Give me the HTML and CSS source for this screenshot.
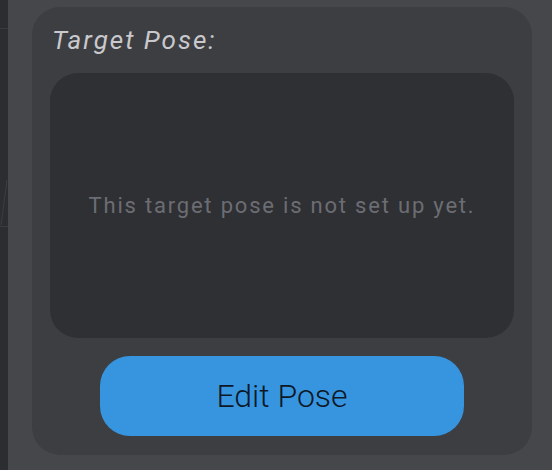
FILE: index.html
```html
<!DOCTYPE html>
<html lang="en">
<head>
<meta charset="UTF-8">
<meta name="viewport" content="width=device-width, initial-scale=1.0">
<title>Target Pose</title>
<link rel="stylesheet" href="styles.css">
</head>
<body>
  <div class="page">
    <div class="side-strip">
      <svg class="strip-lines" width="8" height="470" viewBox="0 0 8 470">
        <line x1="0" y1="28.5" x2="8" y2="28.5" stroke="#3a3b40" stroke-width="1"/>
        <line x1="7" y1="180" x2="1" y2="225" stroke="#3c3d42" stroke-width="1"/>
        <line x1="0" y1="226.5" x2="8" y2="226.5" stroke="#3a3b40" stroke-width="1"/>
      </svg>
    </div>

    <div class="main">
      <div class="pose-card">
        <div class="pose-title">Target Pose:</div>
        <div class="pose-preview">
          <p>This target pose is not set up yet.</p>
        </div>
        <button class="edit-btn">Edit Pose</button>
      </div>
    </div>
  </div>
</body>
</html>
```

FILE: styles.css
```css
body {
  margin: 0;
  padding: 0;
  background-color: #46474b;
  font-family: Roboto, "Liberation Sans", sans-serif;
}
.page {
  display: flex;
  height: 470px;
  overflow: hidden;
}
.side-strip {
  width: 8px;
  flex-shrink: 0;
  background-color: #2c2d31;
}
.strip-lines {
  display: block;
}
.main {
  padding: 7px 0 0 24px;
}

/* 外側のカード */
.pose-card {
  width: 500px;
  height: 448px;
  box-sizing: border-box;
  background-color: #3d3e42;
  border-radius: 28px;
  padding: 19px 18px 0 18px;
  display: flex;
  flex-direction: column;
}
.pose-title {
  font-size: 26px;
  line-height: 29px;
  font-style: italic;
  color: #c9c9cd;
  letter-spacing: 2px;
  padding-left: 2px;
}

/* プレビュー枠 */
.pose-preview {
  margin-top: 18px;
  height: 265px;
  background-color: #2f3034;
  border-radius: 28px;
  display: flex;
  align-items: center;
  justify-content: center;
}
.pose-preview p {
  margin: 0;
  font-size: 22px;
  color: #6c6d73;
  letter-spacing: 1.8px;
}

/* 編集ボタン */
.edit-btn {
  margin: 18px auto 0 auto;
  width: 364px;
  height: 80px;
  border: none;
  border-radius: 30px;
  background-color: #3795e0;
  color: #0d1827;
  font-family: Roboto, "Liberation Sans", sans-serif;
  font-weight: 300;
  font-size: 32px;
  cursor: pointer;
}
```
